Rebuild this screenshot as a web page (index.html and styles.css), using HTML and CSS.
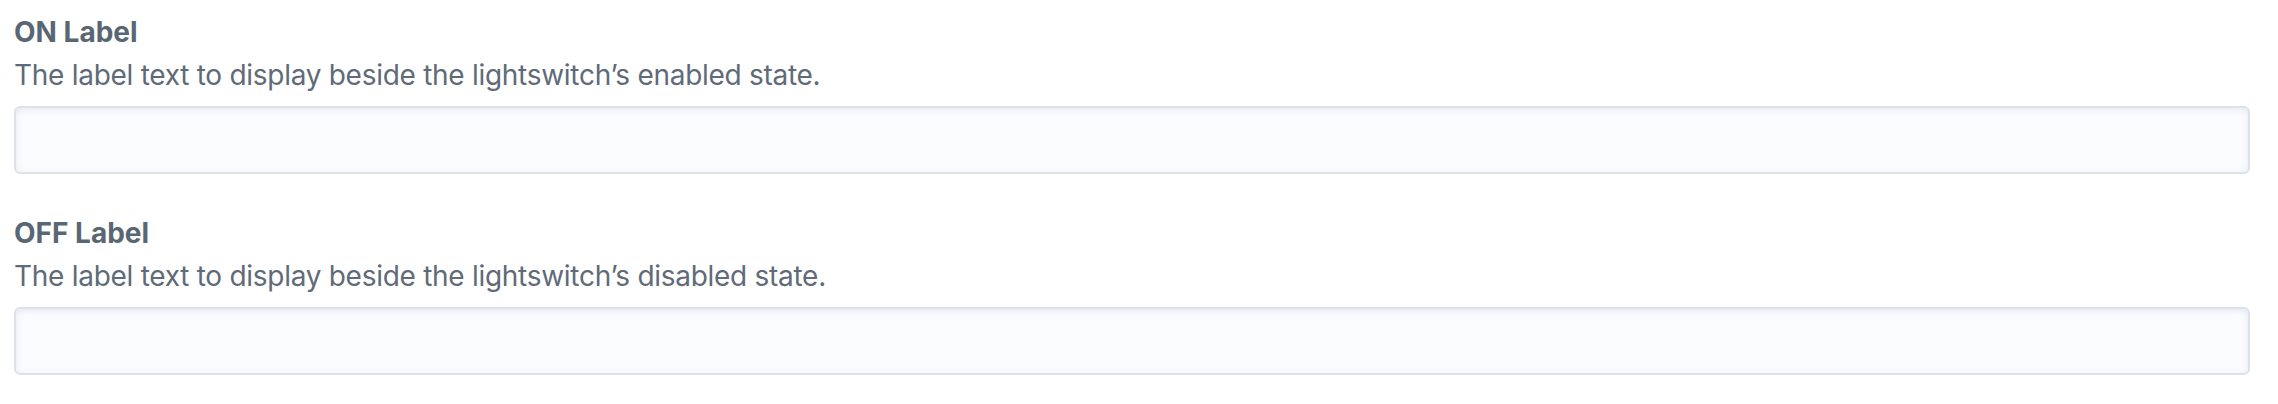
FILE: index.html
```html
<!DOCTYPE html>
<html lang="en">
<head>
  <meta charset="UTF-8" />
  <meta name="viewport" content="width=device-width, initial-scale=1.0"/>
  <title>Lightswitch Settings</title>
  <link rel="stylesheet" href="styles.css">
</head>
<body>

  <div class="campo">
    <label class="campo-titulo" for="onLabel">ON Label</label>
    <div class="instrucoes">The label text to display beside the lightswitch’s enabled state.</div>
    <input type="text" id="onLabel" class="texto" />
  </div>

  <div class="campo">
    <label class="campo-titulo" for="offLabel">OFF Label</label>
    <div class="instrucoes">The label text to display beside the lightswitch’s disabled state.</div>
    <input type="text" id="offLabel" class="texto" />
  </div>

</body>
</html>
```

FILE: styles.css
```css
body {
  margin: 0;
  padding: 12px 28px 0 14px;
  background-color: #ffffff;
  font-family: Inter, "Open Sans", sans-serif;
  font-size: 28px;
  line-height: 40px;
}

.campo {
  display: flex;
  flex-direction: column;
  margin-bottom: 39px;
}

.campo-titulo {
  font-weight: bold;
  color: #596673;
  margin-bottom: 3px;
}

.instrucoes {
  color: #5f6b78;
  letter-spacing: -0.28px;
  margin-bottom: 11px;
}

.texto {
  box-sizing: border-box;
  width: 100%;
  height: 68px;
  margin: 0;
  padding: 0 14px;
  font: inherit;
  background-color: #fbfcfe;
  border: 2px solid #dde2ea;
  border-radius: 6px;
  box-shadow: inset 0 2px 8px -2px rgba(96, 125, 159, 0.22);
  outline: none;
}
```
